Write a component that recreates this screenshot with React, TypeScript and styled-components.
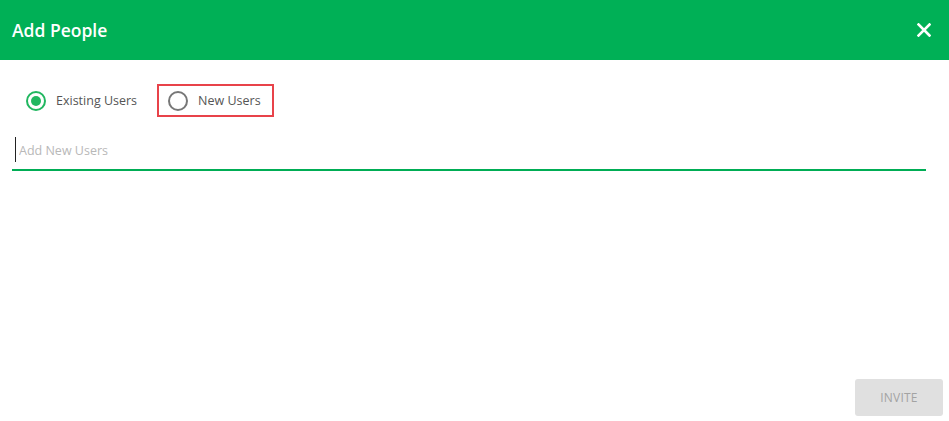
import React from "react";
import styled, { createGlobalStyle } from "styled-components";

const Global = createGlobalStyle`
  html, body { margin: 0; padding: 0; background: #fff; }
  body { font-family: "Open Sans", "Noto Sans", sans-serif; }
  * { box-sizing: border-box; }
`;

const Dialog = styled.div`
  width: 949px;
  height: 421px;
  display: flex;
  flex-direction: column;
  background: #fff;
`;

const Header = styled.header`
  height: 60px;
  background: #00b056;
  display: flex;
  align-items: center;
  justify-content: space-between;
  padding: 0 17px 0 12px;
`;

const Title = styled.h1`
  margin: 0;
  font-size: 17.5px;
  font-weight: 600;
  color: #fff;
  letter-spacing: 0;
`;

const CloseButton = styled.button`
  border: 0;
  background: transparent;
  padding: 0;
  width: 16px;
  height: 16px;
  display: flex;
  align-items: center;
  justify-content: center;
  cursor: pointer;
`;

const Body = styled.div`
  flex: 1;
  display: flex;
  flex-direction: column;
  padding: 24px 23px 0 12px;
`;

const RadioRow = styled.div`
  display: flex;
  align-items: center;
  gap: 20px;
  padding-left: 14px;
`;

const RadioOption = styled.label<{ $highlight?: boolean }>`
  display: flex;
  align-items: center;
  gap: 10px;
  height: 33px;
  padding: 0 ${(p) => (p.$highlight ? "11px" : "0")} 0 ${(p) => (p.$highlight ? "9px" : "0")};
  border: ${(p) => (p.$highlight ? "2px solid #e8434a" : "0")};
  font-size: 12.5px;
  color: #555;
  cursor: pointer;
`;

const RadioCircle = styled.span<{ $checked?: boolean }>`
  width: 20px;
  height: 20px;
  border-radius: 50%;
  border: 2px solid ${(p) => (p.$checked ? "#21b760" : "#777")};
  display: flex;
  align-items: center;
  justify-content: center;
  &::after {
    content: "";
    width: 10px;
    height: 10px;
    border-radius: 50%;
    background: #21b760;
    display: ${(p) => (p.$checked ? "block" : "none")};
  }
`;

const InputWrap = styled.div`
  margin-top: 20px;
  border-bottom: 2px solid #00ad55;
  height: 34px;
  display: flex;
  align-items: flex-start;
`;

const TextInput = styled.input`
  border: 0;
  outline: none;
  width: 100%;
  padding: 2px 0 0 3px;
  height: 25px;
  font-family: "Open Sans", "Noto Sans", sans-serif;
  font-size: 12.5px;
  color: #333;
  border-left: 1px solid #222;
  margin-left: 3px;
  &::placeholder { color: #b8b8b8; }
`;

const Footer = styled.div`
  display: flex;
  justify-content: flex-end;
  padding: 0 6px 5px 0;
`;

const InviteButton = styled.button`
  width: 88px;
  height: 37px;
  border: 0;
  border-radius: 3px;
  background: #e0e0e0;
  color: #a3a3a3;
  font-family: "Open Sans", "Noto Sans", sans-serif;
  font-size: 12px;
  letter-spacing: 0.2px;
`;

const Spacer = styled.div`
  flex: 1;
`;

export default function App() {
  return (
    <>
      <Global />
      <Dialog>
        <Header>
          <Title>Add People</Title>
          <CloseButton aria-label="Close">
            <svg width="14" height="14" viewBox="0 0 14 14">
              <path d="M1.5 1.5 L12.5 12.5 M12.5 1.5 L1.5 12.5" stroke="#fff" strokeWidth="2.6" strokeLinecap="square" />
            </svg>
          </CloseButton>
        </Header>
        <Body>
          <RadioRow>
            <RadioOption>
              <RadioCircle $checked />
              Existing Users
            </RadioOption>
            <RadioOption $highlight>
              <RadioCircle />
              New Users
            </RadioOption>
          </RadioRow>
          <InputWrap>
            <TextInput placeholder="Add New Users" />
          </InputWrap>
          <Spacer />
        </Body>
        <Footer>
          <InviteButton disabled>INVITE</InviteButton>
        </Footer>
      </Dialog>
    </>
  );
}
